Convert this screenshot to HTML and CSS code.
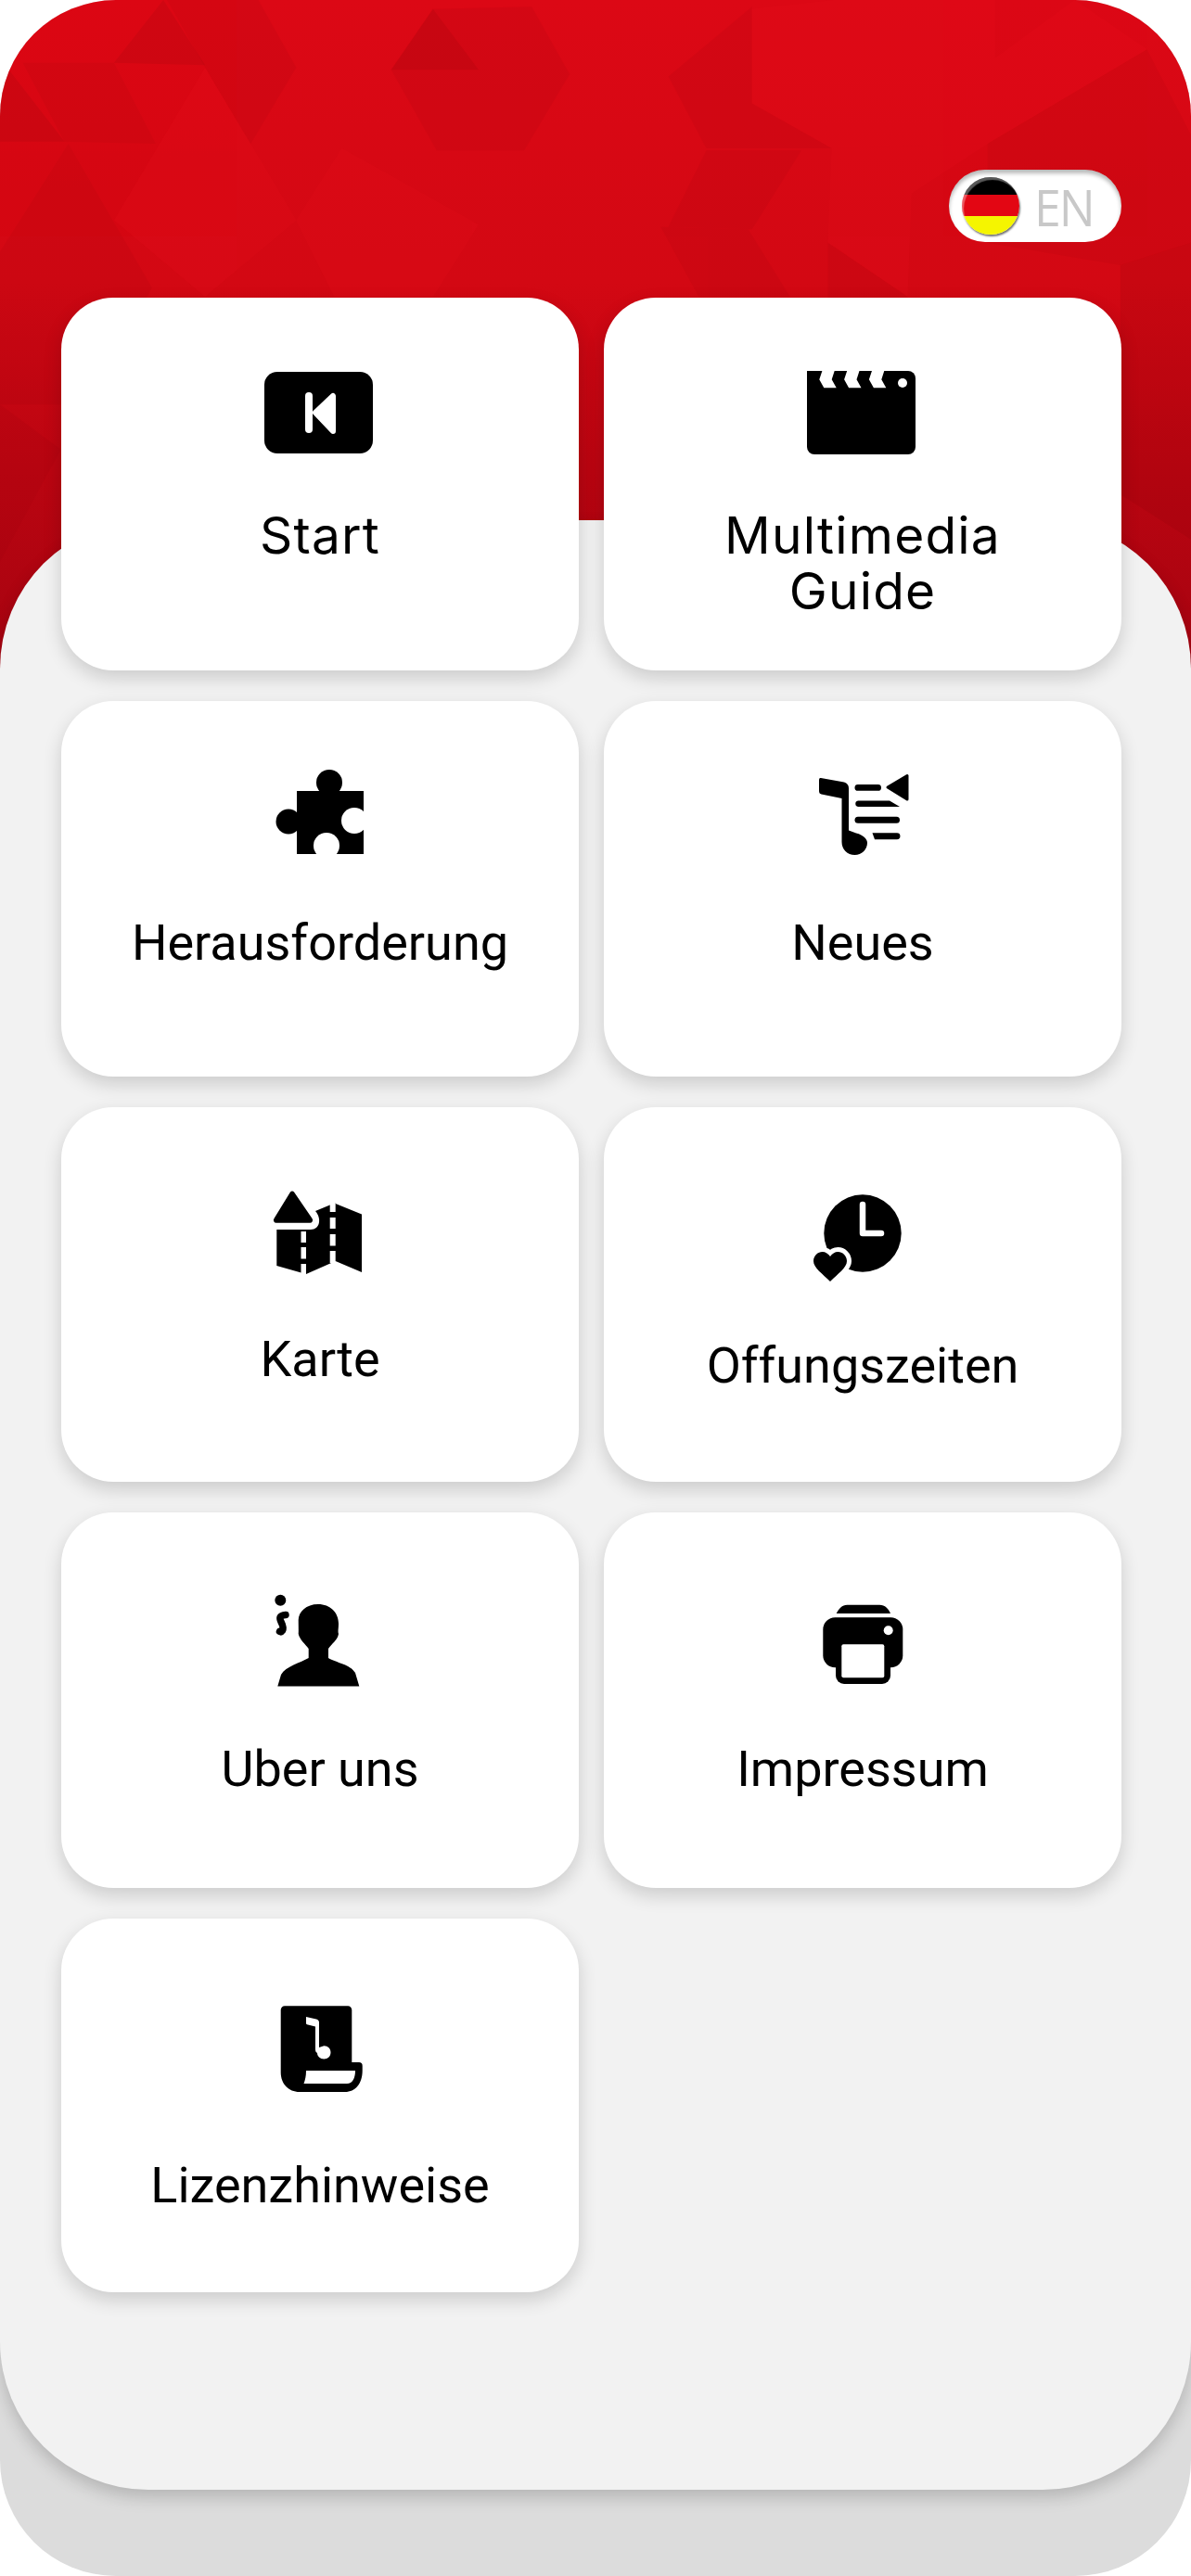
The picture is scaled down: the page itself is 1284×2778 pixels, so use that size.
FILE: index.html
```html
<!DOCTYPE html>
<html lang="en">
<head>
    <meta charset="UTF-8">
    <meta name="viewport" content="width=device-width, initial-scale=1.0">
    <title>Menu</title>
    <link rel="stylesheet" href="styles.css">
</head>
<body>
    <div class="shell">
        <header class="hero">
            <!-- low-poly background, coordinates are stretched on purpose -->
            <svg class="hero-bg" viewBox="0 0 1568 1568" preserveAspectRatio="none">
                <defs>
                    <linearGradient id="heroFade" x1="0" y1="0" x2="0" y2="1">
                        <stop offset="0" stop-color="#dc0815"/>
                        <stop offset="0.4" stop-color="#d30813"/>
                        <stop offset="0.66" stop-color="#bb0511"/>
                        <stop offset="1" stop-color="#a20310"/>
                    </linearGradient>
                </defs>
                <rect width="1568" height="1568" fill="url(#heroFade)"/>
                <g fill="#7a0008" opacity="0.07">
                    <polygon points="570,20 700,15 750,165 690,335 575,335 515,155"/>
                    <polygon points="880,170 990,15 990,230 1095,330 930,330"/>
                    <polygon points="930,335 1055,335 990,510 880,505"/>
                    <polygon points="870,505 985,510 1040,660 920,660"/>
                    <polygon points="30,140 150,140 205,320 85,315"/>
                    <polygon points="340,0 390,150 330,320 270,150 220,0"/>
                    <polygon points="0,560 90,320 200,640 120,900 0,900"/>
                    <polygon points="1300,320 1510,110 1568,300 1568,540 1475,590 1300,540"/>
                    <polygon points="1090,540 1195,660 1195,900 1090,900"/>
                    <polygon points="0,900 80,1000 0,1250"/>
                </g>
                <g fill="#7a0008" opacity="0.12">
                    <polygon points="215,0 270,145 150,140"/>
                    <polygon points="0,130 85,315 0,315"/>
                    <polygon points="570,20 630,155 515,155"/>
                    <polygon points="1475,590 1568,540 1568,1200 1475,1100"/>
                </g>
                <g fill="#ef1420" opacity="0.14">
                    <polygon points="990,20 1100,0 1310,0 1310,130 1415,0 1510,110 1300,320 1095,330 990,230"/>
                    <polygon points="150,490 270,150 390,490 270,660"/>
                    <polygon points="1095,330 1300,320 1200,430 1195,660 1090,540"/>
                    <polygon points="390,490 450,330 630,500 570,660 440,660"/>
                </g>
            </svg>
            <button class="lang-toggle" type="button">
                <span class="lang-flag"></span>
                <span class="lang-code">EN</span>
            </button>
        </header>

        <main class="panel">
            <nav class="menu">
                <a class="card" href="#">
                    <svg class="card-icon" viewBox="0 0 130 130">
                        <rect x="5" y="20" width="117" height="88" rx="14"/>
                        <rect x="49" y="42" width="8" height="44" rx="4" fill="#fff"/>
                        <polygon points="60,64 79,46 79,84" fill="#fff" stroke="#fff" stroke-width="6" stroke-linejoin="round"/>
                    </svg>
                    <span class="card-label poppins">Start</span>
                </a>
                <a class="card" href="#">
                    <svg class="card-icon" viewBox="0 0 130 130">
                        <path d="M5 19H114a8 8 0 0 1 8 8V101a8 8 0 0 1-8 8H13a8 8 0 0 1-8-8Z"/>
                        <g fill="#fff">
                            <polygon points="21.7,18 18.3,28.3 23.3,37.3 36.7,37.3 31.7,28.3 35,18"/>
                            <polygon points="48.5,18 45.1,28.3 50.1,37.3 63.5,37.3 58.5,28.3 61.8,18"/>
                            <polygon points="75.3,18 71.9,28.3 76.9,37.3 90.3,37.3 85.3,28.3 88.6,18"/>
                            <circle cx="108" cy="32" r="5"/>
                        </g>
                    </svg>
                    <span class="card-label poppins">Multimedia<br>Guide</span>
                </a>

                <a class="card" href="#">
                    <svg class="card-icon" viewBox="0 0 130 130">
                        <rect x="40" y="37" width="72" height="68"/>
                        <circle cx="75" cy="28" r="14"/>
                        <circle cx="31" cy="70" r="13.5"/>
                        <circle cx="102" cy="69" r="14" fill="#fff"/>
                        <circle cx="72" cy="96" r="14" fill="#fff"/>
                    </svg>
                    <span class="card-label">Herausforderung</span>
                </a>
                <a class="card" href="#">
                    <svg class="card-icon" viewBox="0 0 130 130">
                        <path d="M20 23L45 27.500Q50 29 50 34V79.500L58 82.500C66 84.500 70 89 70 93C70 100 64 106 56.500 106C48.500 106 42.500 100 42.500 92V45L20.500 40.500Q18 40 18 37V25Q18 22.500 20 23Z"/>
                        <rect x="56.500" y="30" width="28.500" height="6.800" rx="3.400"/>
                        <path d="M60 47.500H94L105 54H60a3.300 3.300 0 0 1 0-6.500Z"/>
                        <rect x="56.500" y="64.700" width="48.500" height="7" rx="3.500"/>
                        <path d="M75.500 82.300H102a3.400 3.400 0 0 1 0 6.900H78Z"/>
                        <path d="M92 33L113 20.500V46Z" stroke="#000" stroke-width="3" stroke-linejoin="round"/>
                    </svg>
                    <span class="card-label">Neues</span>
                </a>

                <a class="card" href="#">
                    <svg class="card-icon" viewBox="0 0 130 130">
                        <path d="M33 31.500a3 3 0 0 1 4 0L56.500 60a3 3 0 0 1-2.500 4.800H18A3 3 0 0 1 15.500 60Z"/>
                        <path d="M18.300 72H55C65 72 67 60 60 52L81.700 43V44L110 55.500V118L81.700 106L50 120L18.300 111Z"/>
                        <g fill="#fff">
                            <rect x="44.500" y="74" width="5.500" height="12"/>
                            <rect x="44.500" y="91" width="5.500" height="12.500"/>
                            <rect x="44.500" y="109" width="5.500" height="13"/>
                            <rect x="75.700" y="43" width="6" height="10"/>
                            <rect x="75.700" y="59" width="6" height="12"/>
                            <rect x="75.700" y="77" width="6" height="12.500"/>
                            <rect x="75.700" y="95" width="6" height="13"/>
                        </g>
                    </svg>
                    <span class="card-label label-karte">Karte</span>
                </a>
                <a class="card" href="#">
                    <svg class="card-icon" viewBox="0 0 130 130">
                        <circle cx="65" cy="76" r="41.700"/>
                        <path d="M65 45V76H85" fill="none" stroke="#fff" stroke-width="6.500" stroke-linecap="round" stroke-linejoin="round"/>
                        <path class="heart" d="M30 128C22 120 12 113 12 106C12 100 17 96 21.500 96C25 96 28 98 30 101C32 98 35 96 38.500 96C43 96 48 100 48 106C48 113 38 120 30 128Z"/>
                    </svg>
                    <span class="card-label label-hours">Offungszeiten</span>
                </a>

                <a class="card" href="#">
                    <svg class="card-icon" viewBox="0 0 130 130">
                        <circle cx="22.300" cy="34.700" r="6"/>
                        <path d="M28 50.500C21 51 21 54 23 58C25 62 26 65 24.500 67.500C23.500 69 22.500 69 21.500 68.500" fill="none" stroke="#000" stroke-width="7.500" stroke-linecap="round"/>
                        <path d="M63 39C76 39 85 48 85 60C85 66 84 68 85 71C84 78 77 82 74 87L74 97C82 102 98 104 103 113L107.300 127.500H19.300L23 115C28 106 44 102 52.700 97L52.700 87C49 82 43 77 41.700 71C42 67 41.700 62 41.700 56C42 47 50 39 63 39Z"/>
                    </svg>
                    <span class="card-label label-about">Uber uns</span>
                </a>
                <a class="card" href="#">
                    <svg class="card-icon" viewBox="0 0 130 130">
                        <path d="M36.700 49C39 44 43 39.700 48.300 39.700H83.300C89 39.700 93 44 95 49Z"/>
                        <rect x="22.300" y="53.300" width="86" height="54" rx="13"/>
                        <rect x="36" y="70" width="59" height="55" rx="9"/>
                        <rect x="42.300" y="82.300" width="46" height="36" rx="2" fill="#fff"/>
                        <circle cx="92.700" cy="67.300" r="5" fill="#fff"/>
                    </svg>
                    <span class="card-label label-about">Impressum</span>
                </a>

                <a class="card" href="#">
                    <svg class="card-icon" viewBox="0 0 130 130">
                        <path d="M27 34.300H95a4.300 4.300 0 0 1 4.300 4.300V95H107a3.700 3.700 0 0 1 3.700 3.700V104C110.700 118 103 127 92 127H43C31 127 22.700 118 22.700 106V38.600A4.300 4.300 0 0 1 27 34.300Z"/>
                        <path d="M50 104H103C103 112 100 118 94 118H47.500C49 114 50 110 50 104Z" fill="#fff"/>
                        <path d="M50 46L61 48.500Q64 49.500 64 52V79L69.300 77.300C73.500 77.300 76.500 80.500 76.500 84.300C76.500 88.500 73.500 91.500 69.300 91.500C65 91.500 62 88.500 62 85C60.500 84 60 83 60 81V56.500L51 54.300Q50 54 50 53Z" fill="#fff"/>
                    </svg>
                    <span class="card-label label-licence">Lizenzhinweise</span>
                </a>
            </nav>
        </main>
    </div>
</body>
</html>
```

FILE: styles.css
```css
* {
    box-sizing: border-box;
}
body {
    margin: 0;
    background-color: #fff;
    font-family: Roboto, Arial, sans-serif;
}
.shell {
    height: 2778px;
    border-radius: 125px;
    overflow: hidden;
    background-color: #dcdcdc;
}

/* red header */
.hero {
    position: relative;
    height: 721px;
    padding: 183px 75px 0 0;
    display: flex;
    justify-content: flex-end;
    align-items: flex-start;
}
.hero-bg {
    position: absolute;
    top: 0;
    left: 0;
    width: 1284px;
    height: 760px;
}
.lang-toggle {
    position: relative;
    width: 186px;
    height: 78px;
    padding: 0 0 0 14px;
    display: flex;
    align-items: center;
    gap: 16px;
    border: none;
    border-radius: 39px;
    background-color: #fff;
    box-shadow: inset 0 4px 4px rgba(0, 0, 0, 0.28);
}
.lang-flag {
    flex: none;
    width: 62px;
    height: 62px;
    border-radius: 50%;
    background: linear-gradient(#000 31%, #e30613 31%, #e30613 68%, #f5f500 68%);
    box-shadow: inset 2px 3px 1px rgba(255, 255, 255, 0.35), 1px 2px 2px rgba(0, 0, 0, 0.55);
}
.lang-code {
    font-family: "Open Sans", sans-serif;
    font-size: 55px;
    line-height: 1;
    letter-spacing: -2px;
    color: #c8c8c8;
    transform: scaleX(0.94);
    transform-origin: left center;
}

/* grey sheet with the cards */
.panel {
    position: relative;
    display: flow-root;
    height: 2124px;
    margin-top: -160px;
    border-radius: 160px;
    background-color: #f2f2f2;
    box-shadow: 0 8px 18px rgba(0, 0, 0, 0.18);
}
.menu {
    display: grid;
    grid-template-columns: 558px 558px;
    grid-template-rows: 402px 405px 404px 405px 403px;
    column-gap: 27px;
    row-gap: 33px;
    margin: -240px 0 0 66px;
}
.card {
    display: flex;
    flex-direction: column;
    align-items: center;
    padding-top: 60px;
    border-radius: 56px;
    background-color: #fff;
    box-shadow: 0 8px 20px rgba(0, 0, 0, 0.16);
    color: #000;
    text-decoration: none;
}
.card-icon {
    flex: none;
    width: 130px;
    height: 130px;
}
.heart {
    stroke: #fff;
    stroke-width: 10px;
    paint-order: stroke;
}
.card-label {
    margin-top: 41px;
    font-size: 54px;
    line-height: 60px;
    text-align: center;
}
.poppins {
    margin-top: 36px;
    font-family: Inter, sans-serif;
    font-size: 55px;
    letter-spacing: 1.200px;
}
.label-karte {
    margin-top: 52px;
}
.label-hours {
    margin-top: 59px;
}
.label-about {
    margin-top: 57px;
}
.label-licence {
    margin-top: 68px;
}
```
